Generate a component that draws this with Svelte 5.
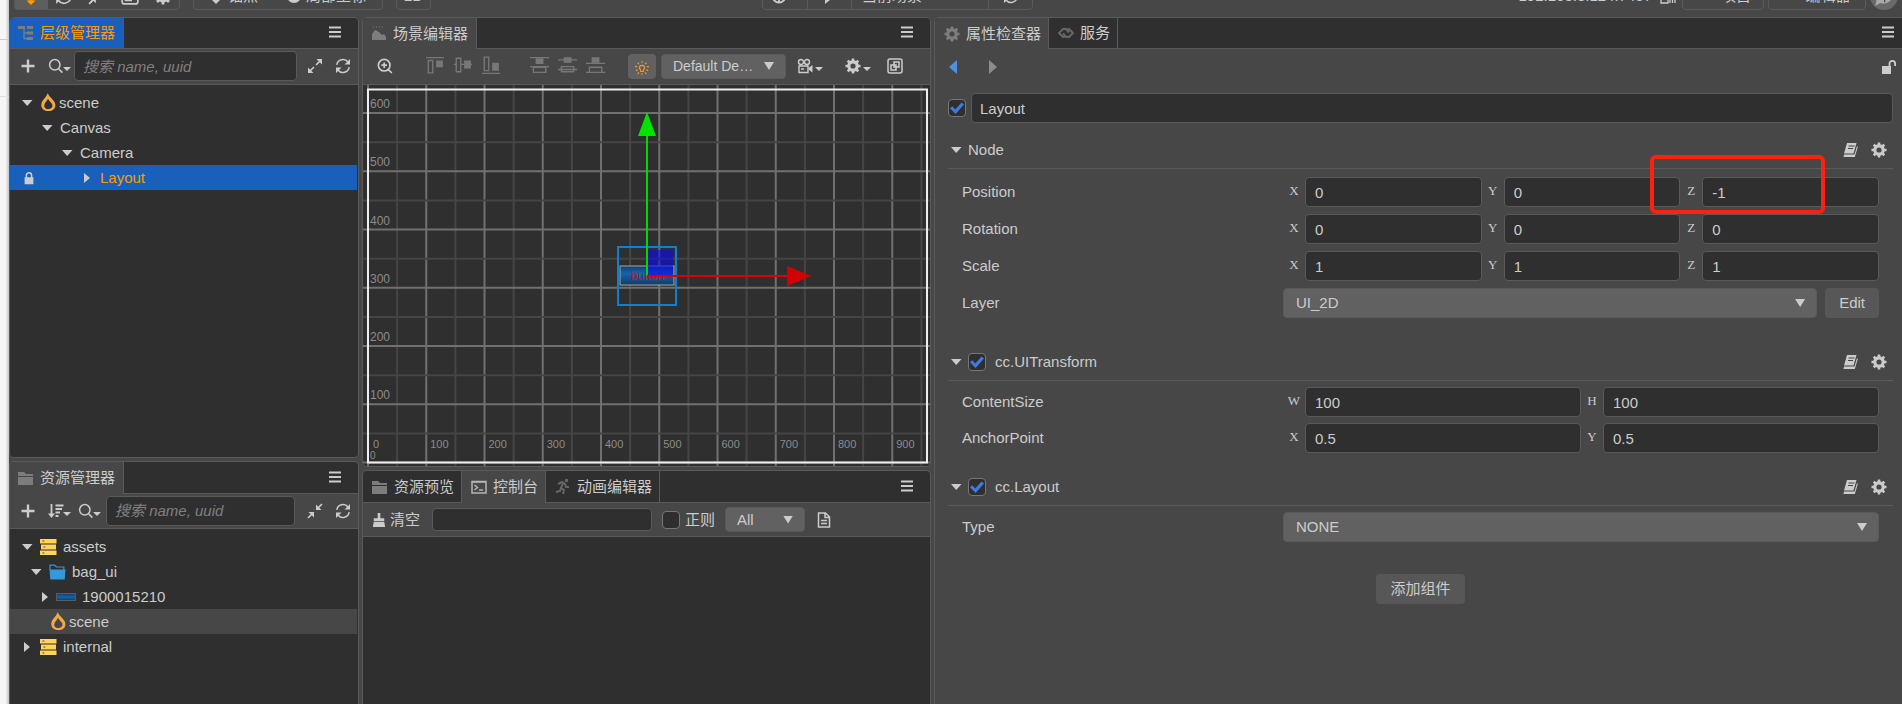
<script>
	// outline of a cog with a round hole in the middle
	function cog(teeth, outer, inner, hole) {
		const step = (Math.PI * 2) / teeth
		const points = []
		for (let i = 0; i < teeth; i++) {
			const corners = [[-0.3, inner], [-0.2, outer], [0.2, outer], [0.3, inner]]
			for (const [offset, radius] of corners) {
				const a = (i + offset) * step
				points.push(`${(8 + radius * Math.cos(a)).toFixed(2)} ${(8 + radius * Math.sin(a)).toFixed(2)}`)
			}
		}
		return `M${points.join('L')}ZM${8 - hole} 8a${hole} ${hole} 0 1 0 ${hole * 2} 0a${hole} ${hole} 0 1 0 ${-hole * 2} 0Z`
	}

	// f: filled path, s: stroked path, w: stroke width, d: dark details on top
	const icons = {
		gear: {f: cog(8, 7.6, 5.8, 2.6)},
		plus: {s: 'M8 1.5v13M1.5 8h13', w: 2.4},
		search: {s: 'M12 6.8a5.2 5.2 0 1 1-10.4 0a5.2 5.2 0 1 1 10.4 0M10.6 10.8l3.8 3.8', w: 1.5},
		zoomIn: {s: 'M13 7.2a5.8 5.8 0 1 1-11.6 0a5.8 5.8 0 1 1 11.6 0M11.4 11.6l3.4 3.4M7.2 4.4v5.6M4.4 7.2h5.6', w: 1.7},
		caret: {f: 'M0 4h16L8 12z'},
		down: {f: 'M3 5h10.500L8.200 11z'},
		right: {f: 'M5 3l6 5-6 5z'},
		navLeft: {f: 'M11 1v14L3 8z'},
		navRight: {f: 'M5 1v14l8-7z'},
		expand: {f: 'M9.500 1H15v5.500zM1 9.500V15h5.500z', s: 'M13 3L9 7M3 13l4-4', w: 1.7},
		collapse: {f: 'M9 1.500V7h5.500zM1.500 9H7v5.500z', s: 'M15 1l-4 4M1 15l4-4', w: 1.7},
		refresh: {f: 'M15 1v5.500H9.500zM1 15V9.500h5.500z', s: 'M1.800 6.800A6.300 6.300 0 0 1 13 4M14.200 9.200A6.300 6.300 0 0 1 3 12', w: 1.5},
		sort: {f: 'M0 10.500h7L3.500 15z', s: 'M3.500 1v11', s2: 'M7.500 2.500h8M7.500 6h6.500M7.500 9.500h4.500M7.500 13h3', w: 1.8},
		lock: {f: 'M3 7h10v8H3z', s: 'M5 8V5a3 3 0 0 1 6 0v3', w: 1.7},
		unlock: {f: 'M1 7h9v8H1z', s: 'M8.500 8V4.600a2.800 2.800 0 0 1 5.600 0V7', w: 1.8},
		fire: {f: 'M7.400 -1C8 3 14.500 5.500 14.500 10.500C14.500 14 11.800 16 8 16S1.200 14 1.200 10.300C1.200 6 5.500 4 7.400 -1zM7.600 4.500C6.500 7 4 8.500 4 11C4 13 5.600 14.200 8 14.200S11.700 12.800 11.700 10.800C11.700 8.500 8.800 7.500 7.600 4.500z'},
		database: {f: 'M0 0h16.500v4.500H0zM1 5.500h15v5H1zM0 11.500h16.500V16H0z', d: 'M2.500 2h1.800M3.500 8h1.800M2.500 14h1.800'},
		folder: {f: 'M.5 5.500h16l-.8 10H1.300z', s: 'M1 6V1.200h4.500L7.500 3h7.300v3', w: 1.2},
		files: {f: 'M0 2h6l2 2h7v2H0zM0 7h15v8H0z'},
		tree: {f: 'M0 1h7v3H0zM9 1h6v3H9zM9 6.500h6v3H9zM9 12h6v3H9z', s: 'M6 4v9.500h3M6 8h3', w: 1.3},
		chart: {f: 'M1 14V8l3-4 4 2 3 3 2-1 2 3v3z', s: 'M2 1h1M5 1h1M8 1h1M11 1h1', w: 1},
		chain: {s: 'M7 11l-2 1-4-4 4-4h3l3 3.500M9 5l2-1 4 4-4 4H8L5 8.500', w: 2},
		terminal: {s: 'M1 2.500h14v11.500H1z', s2: 'M1 3h14M3.500 6l3 2.500-3 2.500M8 11h4', w: 1.5},
		runner: {f: 'M10 0h3v3h-3z', s: 'M3 5l4-2 3 2 1 3h3M8 4l-2 5 3 2-1 4M6 9l-1 3-4 1', w: 2},
		broom: {f: 'M6.500 0h3v6H14v3H2V6h4.500zM2 10h12l1 6H1z'},
		doc: {s: 'M2.500 1h7l4 4v10h-11zM9 1v4.500h4.500', s2: 'M5 8.500h6M5 11.500h6', w: 1.5},
		book: {f: 'M5 1h9.500l-3 10.500H2zM2 12.500h10.500L15 4l.8 1-3 10H1.500z', d: 'M6.500 4h6M6 6.500h5'},
		camera: {f: 'M11.500 10l4-3v7.500l-4-3z', s: 'M6.500 4a2.500 2.500 0 1 1-5 0a2.500 2.500 0 1 1 5 0M12.500 4a2.500 2.500 0 1 1-5 0a2.500 2.500 0 1 1 5 0M2 8h9v6.500H2zM4 11h3', w: 1.4},
		popout: {s: 'M3 1h10a2 2 0 0 1 2 2v10a2 2 0 0 1-2 2H3a2 2 0 0 1-2-2V3a2 2 0 0 1 2-2zM7 4h5v5H7zM4 7h5v5H4z', w: 1.5},
		light: {s: 'M6.500 12V10.500L5 8a3 3 0 1 1 6 0L9.500 10.500V12z', s2: 'M8 0v2M3 2l1.500 1.500M13 2l-1.500 1.500M0 6.500h2.500M13.500 6.500H16M1 11l2-1M15 11l-2-1M3 15l1.500-2M13 15l-1.500-2M8 14v2', w: 1.3},
		alignTop: {f: 'M9 4h6v6H9z', s: 'M0 1.500h16M2 4h4v11H2z', w: 1.2},
		alignMid: {f: 'M9 4h6v7H9z', s: 'M2 2h4v12H2zM0 7.500h2M6 7.500h3M15 7.500h1', w: 1.2},
		alignBottom: {f: 'M9 6h6v7H9z', s: 'M0 15.500h16M2 1h4v12H2z', w: 1.2},
		spreadTop: {f: 'M5 2h7v5H5z', s: 'M0 1.500h17M0 9.500h17M3 10h11v4.500H3z', w: 1.2},
		spreadMid: {f: 'M5 1h7v5H5z', s: 'M0 3.500h17M0 12h17M3 9.500h11v4.500H3z', w: 1.2},
		spreadBottom: {f: 'M5 1h7v5H5z', s: 'M0 6.500h17M0 14.500h17M3 10h11v4.500H3z', w: 1.2},
		menu: {s: 'M2 3.500h12M2 8h12M2 12.500h12', w: 1.8},
		globe: {s: 'M14.500 8a6.500 6.500 0 1 1-13 0a6.500 6.500 0 1 1 13 0M8 1v14M1 8h14', w: 1.8},
		ball: {f: 'M1 8a7 7 0 1 0 14 0a7 7 0 1 0-14 0z'},
		signal: {s: 'M1 6h7v9H1zM10 15v-5M12.500 15V7M15 15V4', w: 1.3},
		play: {f: 'M4 0l10 8-10 8z'},
		move: {f: 'M8 0l4 4H9.500v8H12l-4 4-4-4h2.500V4H4z'},
		bubble: {f: 'M8 1a7 6.500 0 1 1-3 12.500L1 16l1-4.500A7 6.500 0 0 1 8 1z', d: 'M8.500 6v7'}
	}

	const hierarchy = [
		{name: 'scene', pad: 9, open: true, icon: 'fire'},
		{name: 'Canvas', pad: 29, open: true},
		{name: 'Camera', pad: 49, open: true},
		{name: 'Layout', pad: 69, open: false, locked: true}
	]

	const assets = [
		{name: 'assets', pad: 9, open: true, icon: 'database'},
		{name: 'bag_ui', pad: 18, open: true, icon: 'folder'},
		{name: '1900015210', pad: 27, open: false, icon: 'sprite'},
		{name: 'scene', pad: 19, leaf: true, icon: 'fire', active: true},
		{name: 'internal', pad: 9, open: false, icon: 'database'}
	]

	const nodeRows = [
		{name: 'Position', fields: [['X', '0'], ['Y', '0'], ['Z', '-1']], marked: true},
		{name: 'Rotation', fields: [['X', '0'], ['Y', '0'], ['Z', '0']]},
		{name: 'Scale', fields: [['X', '1'], ['Y', '1'], ['Z', '1']]}
	]

	const transformRows = [
		{name: 'ContentSize', fields: [['W', '100'], ['H', '100']]},
		{name: 'AnchorPoint', fields: [['X', '0.5'], ['Y', '0.5']]}
	]

	// scene view rulers
	const cell = 58.25
	const left = 5
	const bottom = 377.5
	const steps = Array.from({length: 20}, (_, i) => i)
</script>

{#snippet icon(name, size = 16)}
	<svg class="icon icon-{name}" width={size} height={size} viewBox="0 0 16 16" aria-hidden="true">
		{#if icons[name].f}<path d={icons[name].f} fill="currentColor" fill-rule="evenodd" />{/if}
		{#if icons[name].s}<path d={icons[name].s} fill="none" stroke="currentColor" stroke-width={icons[name].w} />{/if}
		{#if icons[name].s2}<path d={icons[name].s2} fill="none" stroke="currentColor" stroke-width={icons[name].w} />{/if}
		{#if icons[name].d}<path d={icons[name].d} stroke="#444" />{/if}
	</svg>
{/snippet}

{#snippet tab(name, title, state)}
	<button class="tab {state}" role="tab" aria-selected={state !== ''}>
		{@render icon(name)}
		<span>{title}</span>
	</button>
{/snippet}

{#snippet menu()}
	<button class="plain menu" aria-label="menu">{@render icon('menu')}</button>
{/snippet}

{#snippet tool(name, caret = false)}
	<button class="plain tool" aria-label={name}>
		{@render icon(name)}
		{#if caret}{@render icon('caret', 8)}{/if}
	</button>
{/snippet}

{#snippet rows(items)}
	<ul class="tree">
		{#each items as item}
			<li class="node" class:selected={item.locked} class:active={item.active} style="padding-left: {item.pad}px">
				{#if item.locked}<span class="lock">{@render icon('lock', 14)}</span>{/if}
				<span class="arrow">
					{#if !item.leaf}{@render icon(item.open ? 'down' : 'right')}{/if}
				</span>
				{#if item.icon === 'sprite'}
					<span class="sprite"></span>
				{:else if item.icon}
					<span class="kind {item.icon}">{@render icon(item.icon, item.icon === 'fire' ? 17 : 16)}</span>
				{/if}
				<span class="name">{item.name}</span>
			</li>
		{/each}
	</ul>
{/snippet}

{#snippet prop(row)}
	<div class="prop">
		<span class="label">{row.name}</span>
		<div class="fields">
			{#each row.fields as [axis, value]}
				<label class="field"><span class="axis">{axis}</span><input type="text" {value} /></label>
			{/each}
			{#if row.marked}<span class="mark"></span>{/if}
		</div>
	</div>
{/snippet}

{#snippet sectionHead(title, checkable)}
	<header class="section-head">
		{@render icon('down')}
		{#if checkable}
			<input id={title} type="checkbox" checked />
			<label class="title shifted" for={title}>{title}</label>
		{:else}
			<span class="title">{title}</span>
		{/if}
		<button class="plain" aria-label="help">{@render icon('book')}</button>
		<button class="plain" aria-label="settings">{@render icon('gear')}</button>
	</header>
{/snippet}

<div class="page">
	<div class="behind"></div>
	<div class="editor">
		<div class="topbar">
			<div class="group tools">
				<button class="on" aria-label="move">{@render icon('move', 18)}</button>
				<button aria-label="rotate">{@render icon('refresh', 18)}</button>
				<button aria-label="scale">{@render icon('collapse', 18)}</button>
				<button aria-label="rect">{@render icon('popout', 18)}</button>
				<button aria-label="transform">{@render icon('gear', 18)}</button>
			</div>
			<div class="group pivots">
				<button>{@render icon('move')}锚点</button>
				<button>{@render icon('ball')}局部坐标</button>
			</div>
			<div class="group flat"><button>2D</button></div>
			<span class="space-left"></span>
			<div class="group preview">
				<button class="split" aria-label="browser">{@render icon('globe')}{@render icon('caret', 8)}</button>
				<button class="split" aria-label="play">{@render icon('play')}</button>
				<button class="split where">当前场景</button>
				<button aria-label="reload">{@render icon('refresh')}</button>
			</div>
			<span class="space-right"></span>
			<span class="address">192.168.3.124:7457{@render icon('signal')}</span>
			<div class="group project"><button>项目</button></div>
			<div class="group app"><button>编辑器</button></div>
			<span class="avatar">{@render icon('bubble', 20)}</span>
		</div>

		<main class="columns">
			<div class="column">
				<section class="panel hierarchy">
					<header class="tabs">{@render tab('tree', '层级管理器', 'focus')}{@render menu()}</header>
					<div class="toolbar">
						{@render tool('plus')}
						{@render tool('search', true)}
						<input class="search" type="text" placeholder="搜索 name, uuid" aria-label="搜索" />
						{@render tool('expand')}
						{@render tool('refresh')}
					</div>
					<div class="body">{@render rows(hierarchy)}</div>
				</section>
				<section class="panel assets">
					<header class="tabs">{@render tab('files', '资源管理器', 'current')}{@render menu()}</header>
					<div class="toolbar">
						{@render tool('plus')}
						<div class="pair">
							{@render tool('sort', true)}
							{@render tool('search', true)}
						</div>
						<input class="search" type="text" placeholder="搜索 name, uuid" aria-label="搜索" />
						{@render tool('collapse')}
						{@render tool('refresh')}
					</div>
					<div class="body">{@render rows(assets)}</div>
				</section>
			</div>

			<div class="column">
				<section class="panel scene">
					<header class="tabs">{@render tab('chart', '场景编辑器', 'current')}{@render menu()}</header>
					<div class="toolbar scene-tools">
						{@render tool('zoomIn')}
						<div class="aligns">
							{#each ['alignTop', 'alignMid', 'alignBottom'] as name}
								<button class="plain" aria-label={name}>{@render icon(name, 18)}</button>
							{/each}
						</div>
						<div class="aligns">
							{#each ['spreadTop', 'spreadMid', 'spreadBottom'] as name}
								<button class="plain" aria-label={name}>{@render icon(name, 18)}</button>
							{/each}
						</div>
						<button class="plain lamp" aria-label="light">{@render icon('light', 14)}</button>
						<span class="drop device">
							<select aria-label="device"><option>Default De…</option></select>
						</span>
						{@render tool('camera', true)}
						<span class="gizmo">{@render tool('gear', true)}</span>
						{@render tool('popout')}
					</div>
					<div class="view">
						<svg class="stage" width="100%" height="100%">
							<defs>
								<linearGradient id="bar" x2="0" y2="1">
									<stop offset="0" stop-color="#104070" />
									<stop offset=".4" stop-color="#1565ad" />
									<stop offset="1" stop-color="#123a62" />
								</linearGradient>
							</defs>
							{#each steps as i}
								<line x1={left + (i * cell) / 2} x2={left + (i * cell) / 2} y1="0" y2="100%" class:major={i % 2 === 0} />
							{/each}
							{#each steps.slice(0, 13) as i}
								<line x1="0" x2="100%" y1={bottom - (i * cell) / 2} y2={bottom - (i * cell) / 2} class:major={i % 2 === 0} />
							{/each}
							{#each steps.slice(0, 10) as i}
								<text x={left + i * cell + (i ? 4 : 5)} y="363" font-size="11">{i * 100}</text>
							{/each}
							{#each steps.slice(0, 7) as i}
								<text x="7" y={bottom - i * cell - (i ? 5 : 4)} font-size={i ? 12 : 10}>{i * 100}</text>
							{/each}
							<rect class="canvas" x="5" y="4.500" width="559" height="373" />
							<rect x="257" y="181" width="54" height="19" fill="url(#bar)" stroke="#a9a9a0" />
							<text class="button-text" x="268" y="195" font-size="12">button</text>
							<rect x="284" y="165" width="26" height="26" fill="#0808f0" opacity=".6" />
							<rect class="bounds" x="255" y="162" width="58" height="58" />
							<path d="M284 191V50" stroke="#00d800" stroke-width="2" />
							<path d="M284 27l9 24h-18z" fill="#00e400" />
							<path d="M284 191h141" stroke="#d80000" stroke-width="2" />
							<path d="M424 181v20l24-10z" fill="#d40000" />
						</svg>
					</div>
				</section>
				<section class="panel console">
					<header class="tabs">
						{@render tab('files', '资源预览', '')}
						{@render tab('terminal', '控制台', 'current')}
						{@render tab('runner', '动画编辑器', '')}
						{@render menu()}
					</header>
					<div class="toolbar console-tools">
						<button class="plain clear">{@render icon('broom', 14)}清空</button>
						<input class="filter" type="text" aria-label="filter" />
						<input id="regex" type="checkbox" />
						<label for="regex">正则</label>
						<span class="drop level"><select aria-label="level"><option>All</option></select></span>
						{@render tool('doc')}
					</div>
					<div class="body"></div>
				</section>
			</div>

			<div class="column">
				<section class="panel inspector">
					<header class="tabs">
						{@render tab('gear', '属性检查器', 'current')}
						{@render tab('chain', '服务', '')}
						{@render menu()}
					</header>
					<nav class="history">
						<button class="plain back" aria-label="back">{@render icon('navLeft')}</button>
						<button class="plain forward" aria-label="forward">{@render icon('navRight')}</button>
						<button class="plain unlock" aria-label="lock">{@render icon('unlock')}</button>
					</nav>
					<div class="sheet">
						<div class="node-name">
							<input type="checkbox" checked aria-label="active" />
							<input type="text" value="Layout" aria-label="name" />
						</div>
						<section class="section first">
							{@render sectionHead('Node', false)}
							<div class="props">
								{#each nodeRows as row}{@render prop(row)}{/each}
								<div class="prop">
									<label class="label" for="layer">Layer</label>
									<div class="fields">
										<span class="drop wide"><select id="layer"><option>UI_2D</option></select></span>
										<button class="button">Edit</button>
									</div>
								</div>
							</div>
						</section>
						<section class="section">
							{@render sectionHead('cc.UITransform', true)}
							<div class="props">
								{#each transformRows as row}{@render prop(row)}{/each}
							</div>
						</section>
						<section class="section">
							{@render sectionHead('cc.Layout', true)}
							<div class="props">
								<div class="prop">
									<label class="label" for="type">Type</label>
									<div class="fields">
										<span class="drop wide"><select id="type"><option>NONE</option></select></span>
									</div>
								</div>
							</div>
						</section>
						<button class="button add">添加组件</button>
					</div>
				</section>
			</div>
		</main>
	</div>
</div>

<style>
	:global(body) {
		margin: 0;
		background: #474747;
	}

	.page, .page *, .page *::after {
		box-sizing: border-box;
	}

	.page {
		display: flex;
		height: 100vh;
		overflow: hidden;
		color: #ccc;
		font: 15px/20px "Liberation Sans", "Noto Sans CJK SC", sans-serif;
	}

	.behind {
		flex: 0 0 9px;
		background: linear-gradient(#ccc, #ccc) 0 39px / 100% 1px no-repeat, linear-gradient(#ddd, #ddd) 0 96px / 100% 1px no-repeat, linear-gradient(90deg, #f6f6f6 60%, #c4c4c4);
	}

	.editor {
		flex: 1;
		min-width: 0;
		display: flex;
		flex-direction: column;
		background: #474747;
	}

	button, input, select {
		font: inherit;
		color: inherit;
		margin: 0;
	}

	.icon {
		display: block;
		flex: none;
		overflow: visible;
	}

	.plain {
		display: flex;
		align-items: center;
		padding: 0;
		border: 0;
		background: none;
	}

	/* top bar */
	.topbar {
		flex: 0 0 17px;
		display: flex;
		align-items: flex-end;
		padding: 0 4px 7px 5px;
		overflow: hidden;
	}

	.group {
		flex: none;
		display: flex;
		height: 28px;
		border: 1px solid #5a5a5a;
		border-radius: 4px;
	}

	.group button {
		flex: 1;
		display: flex;
		align-items: center;
		justify-content: center;
		gap: 4px;
		padding: 0;
		border: 0;
		background: none;
		white-space: nowrap;
	}

	.tools {
		width: 166px;
		margin-right: 13px;
	}

	.group .on {
		background: #5e5e5e;
		color: #fd9a00;
	}

	.pivots {
		width: 190px;
		margin-right: 13px;
		padding-left: 14px;
		gap: 28px;
	}

	.group.pivots button {
		flex: none;
	}

	.flat {
		width: 35px;
	}

	.space-left {
		flex: 330;
	}

	.space-right {
		flex: 483;
	}

	.preview {
		width: 271px;
	}

	.group .split {
		border-right: 1px solid #5a5a5a;
	}

	.group .where {
		flex: 0 0 137px;
		justify-content: flex-start;
		padding-left: 10px;
	}

	.address {
		display: flex;
		align-items: center;
		gap: 8px;
		height: 28px;
		margin-right: 6px;
		white-space: nowrap;
	}

	.project {
		width: 82px;
		margin-right: 4px;
		padding-left: 26px;
	}

	.app {
		width: 98px;
		margin-right: 4px;
		padding-left: 22px;
	}

	.avatar {
		flex: none;
		display: grid;
		place-items: center;
		width: 28px;
		height: 28px;
		border-radius: 14px;
		background: #6a6a6a;
		color: #aaa;
	}

	/* columns and panels */
	.columns {
		flex: 1;
		min-height: 0;
		display: grid;
		grid-template-columns: 350fr 569fr 968fr;
		gap: 3px;
	}

	.column {
		min-width: 0;
		min-height: 0;
		display: flex;
		flex-direction: column;
		gap: 3px;
	}

	.panel {
		display: flex;
		flex-direction: column;
		min-height: 0;
		border: 1px solid #5a5a5a;
		border-radius: 5px;
		overflow: hidden;
	}

	.hierarchy {
		flex: 441 0 0;
	}

	.assets, .console {
		border-bottom: 0;
		border-bottom-left-radius: 0;
		border-bottom-right-radius: 0;
	}

	.assets {
		flex: 243 0 0;
	}

	.scene {
		flex: 450 0 0;
	}

	.console {
		flex: 234 0 0;
	}

	.inspector {
		flex: 1;
		border-right: 0;
		border-bottom: 0;
		border-radius: 5px 0 0 0;
	}

	.tabs {
		flex: 0 0 31px;
		display: flex;
		border-bottom: 1px solid #5a5a5a;
		background: #2f2f2f;
	}

	.assets .tabs, .console .tabs {
		flex-basis: 32px;
	}

	.tab {
		display: flex;
		align-items: center;
		gap: 6px;
		padding: 0 8px;
		border: 0;
		border-right: 1px solid #5a5a5a;
		background: none;
		white-space: nowrap;
	}

	.console .tab, .inspector .tab {
		padding: 0 7px 0 9px;
	}

	.tab :global(.icon) {
		color: #7d7d7d;
	}

	.tab :global(.icon-terminal) {
		color: #b5b5b5;
	}

	.tab :global(.icon-chain), .tab :global(.icon-runner) {
		color: #666;
	}

	.current {
		margin-bottom: -1px;
		background: #474747;
	}

	.focus {
		background: #1860bb;
		color: #fd9a00;
	}

	.menu {
		margin: 0 15px 0 auto;
		padding-bottom: 2px;
	}

	.inspector .menu {
		margin-right: 6px;
	}

	.toolbar {
		flex: 0 0 36px;
		display: flex;
		align-items: center;
		border-bottom: 1px solid #5a5a5a;
		padding: 0 7px 1px 10px;
		gap: 12px;
	}

	.assets .toolbar {
		flex-basis: 35px;
	}

	.pair {
		display: flex;
		gap: 8px;
	}

	.tool :global(.icon-caret) {
		margin: 6px -1px 0 -1px;
	}

	.scene-tools :global(.icon-caret) {
		margin-left: 2px;
	}

	input[type="text"] {
		min-width: 0;
		height: 30px;
		padding: 0 9px;
		border: 1px solid #5a5a5a;
		border-radius: 4px;
		outline: 0;
		background: #2f2f2f;
	}

	.toolbar .search {
		flex: 1;
		margin: 0 -2px 0 -8px;
		padding: 0 8px;
	}

	.assets .toolbar .search {
		margin: 0 0 0 -6px;
	}

	.search::placeholder {
		color: #808080;
		font-style: italic;
	}

	input[type="checkbox"] {
		flex: none;
		appearance: none;
		display: grid;
		place-items: center;
		width: 18px;
		height: 18px;
		border: 1px solid #777;
		border-radius: 4px;
		background: #2f2f2f;
	}

	input[type="checkbox"]:checked::after {
		content: "";
		width: 14px;
		height: 12px;
		background: #3f7ae0;
		clip-path: polygon(0 52%, 16% 35%, 38% 62%, 82% 4%, 100% 20%, 40% 100%);
	}

	.body {
		flex: 1;
		min-height: 0;
		padding-top: 5px;
		background: #2f2f2f;
	}

	/* trees */
	.tree {
		margin: 0;
		padding: 0;
		list-style: none;
	}

	.node {
		position: relative;
		display: flex;
		align-items: center;
		height: 25px;
		margin-right: 1px;
	}

	.arrow {
		width: 16px;
		margin-right: 5px;
	}

	.lock {
		position: absolute;
		left: 12px;
	}

	.kind {
		margin: 0 5px 0 0;
	}

	.kind.fire {
		width: 14px;
		color: #f2a94b;
	}

	.kind.database {
		width: 18px;
		color: #ffd45e;
	}

	.kind.folder {
		width: 18px;
		color: #3498db;
	}

	.sprite {
		width: 20px;
		height: 8px;
		margin: 0 6px 0 -2px;
		border: 1px solid #5b5b5b;
		background: linear-gradient(#0b4380, #1364ae, #0b4380);
	}

	.selected {
		background: #1860bb;
	}

	.selected .name {
		color: #fd9a00;
	}

	.active {
		background: #474747;
	}

	/* scene editor */
	.scene-tools {
		gap: 11px;
		padding-left: 14px;
	}

	.aligns {
		display: flex;
		gap: 10px;
		margin: -3px 0 0 22px;
		color: #777;
	}

	.aligns + .aligns {
		margin-left: 19px;
	}

	.lamp {
		width: 28px;
		height: 25px;
		margin-left: 13px;
		padding-top: 3px;
		justify-content: center;
		border-radius: 4px;
		background: #616161;
		color: #fd942b;
	}

	.drop {
		position: relative;
		display: flex;
	}

	.drop::after {
		content: "";
		position: absolute;
		top: 50%;
		right: 12px;
		width: 10px;
		height: 8px;
		margin-top: -4px;
		background: #ccc;
		clip-path: polygon(0 0, 100% 0, 50% 100%);
		pointer-events: none;
	}

	.drop select {
		appearance: none;
		width: 100%;
		height: 30px;
		padding: 0 12px;
		border: 1px solid #5a5a5a;
		border-radius: 4px;
		outline: 0;
		background: #616161;
	}

	.device {
		width: 125px;
		margin-left: -6px;
		font-size: 14px;
	}

	.drop.device select, .drop.level select {
		height: 25px;
		padding: 0 11px;
	}

	.gizmo {
		margin: 0 6px 0 12px;
	}

	.view {
		flex: 1;
		min-height: 0;
		overflow: hidden;
		background: #2f2f2f;
	}

	.stage {
		display: block;
	}

	.stage line {
		stroke: #454545;
		stroke-width: 2;
	}

	.stage .major {
		stroke: #707070;
	}

	.stage text {
		fill: #8c8c8c;
	}

	.stage .button-text {
		fill: #b0203c;
	}

	.canvas {
		fill: none;
		stroke: #eee;
		stroke-width: 2;
	}

	.bounds {
		fill: none;
		stroke: #107fd0;
		stroke-width: 2;
	}

	/* console */
	.console-tools {
		flex-basis: 34px;
		gap: 0;
		padding: 0 7px 0 9px;
	}

	.clear {
		gap: 4px;
	}

	.console-tools .filter {
		width: 220px;
		height: 23px;
		margin: 0 10px 0 12px;
	}

	.console-tools label {
		margin: 0 10px 0 5px;
	}

	.level {
		width: 80px;
		margin-right: 11px;
	}

	/* inspector */
	.history {
		display: flex;
		align-items: center;
		height: 36px;
		padding: 0 5px 0 11px;
	}

	.back {
		color: #5090e0;
	}

	.forward {
		margin-left: 22px;
		color: #8c8c8c;
	}

	.unlock {
		margin-left: auto;
	}

	.sheet {
		display: flex;
		flex-direction: column;
		padding: 8px 9px 0 13px;
	}

	.node-name {
		display: flex;
		align-items: center;
		gap: 5px;
		margin-bottom: 9px;
	}

	.node-name input[type="text"] {
		flex: 1;
		padding: 0 8px;
	}

	.section {
		margin-bottom: 16px;
	}

	.section.first {
		margin-bottom: 26px;
	}

	.section-head {
		display: flex;
		align-items: center;
		height: 37px;
		padding-right: 6px;
		border-bottom: 1px solid #5a5a5a;
	}

	.section-head input {
		margin-left: 4px;
	}

	.section-head .title {
		margin: 0 auto 0 4px;
	}

	.section-head .shifted {
		margin-left: 9px;
	}

	.section-head button {
		margin-left: 13px;
	}

	.props {
		display: flex;
		flex-direction: column;
		gap: 6px;
		padding: 6px 14px 0;
	}

	.first .props {
		gap: 7px;
		padding-top: 8px;
	}

	.prop {
		display: flex;
		align-items: center;
		height: 30px;
	}

	.label {
		flex: 35 1 0;
	}

	.fields {
		position: relative;
		flex: 65 1 0;
		min-width: 0;
		display: flex;
	}

	.field {
		flex: 1 1 0;
		min-width: 0;
		display: flex;
		align-items: center;
	}

	.axis {
		width: 22px;
		flex: none;
		padding-bottom: 2px;
		text-align: center;
		font-family: "Liberation Serif", serif;
		font-size: 13px;
	}

	.field input {
		flex: 1;
	}

	.mark {
		position: absolute;
		top: -22px;
		right: 54px;
		width: 175px;
		height: 59px;
		border: 4px solid #ff2010;
		border-radius: 6px;
		pointer-events: none;
	}

	.wide {
		flex: 1;
	}

	.button {
		height: 30px;
		padding: 0 14px;
		border: 0;
		border-radius: 4px;
		background: #575757;
	}

	.fields .button {
		margin-left: 8px;
	}

	.add {
		align-self: center;
		margin-top: 16px;
	}
</style>
